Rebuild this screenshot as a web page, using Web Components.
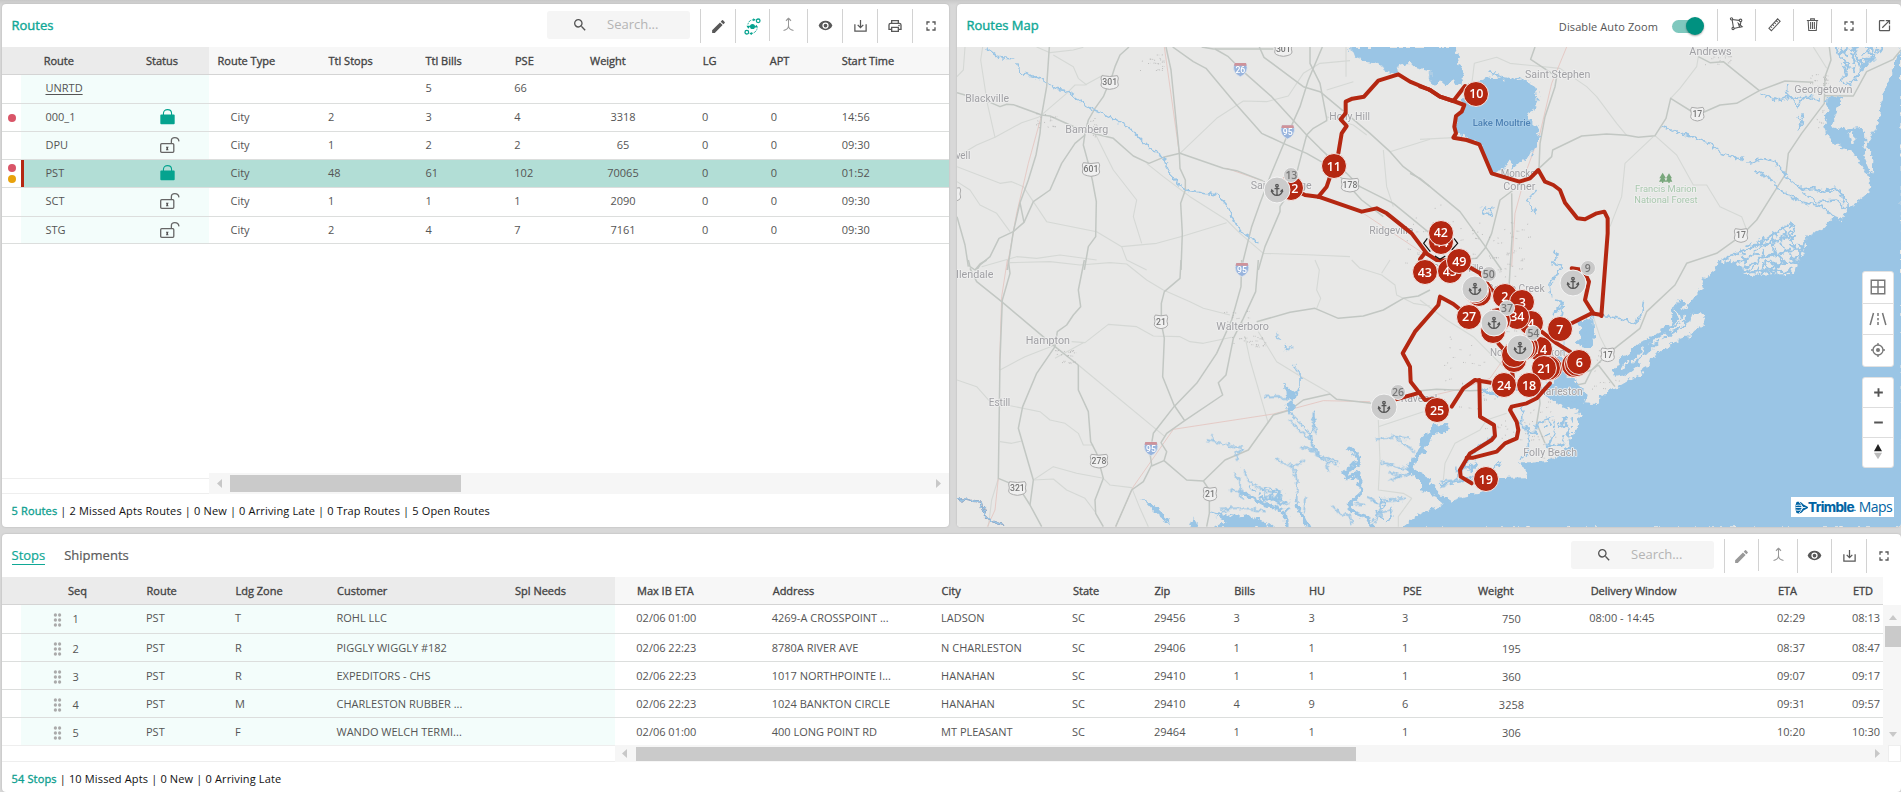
<!DOCTYPE html>
<html lang="en">
<head>
<meta charset="utf-8">
<title>Routes</title>
<style>
html,body{margin:0;height:100%}
body{background:#d8d8d8;font-family:"Open Sans","Noto Sans",sans-serif;font-size:11px;color:#555;overflow:hidden}
</style>
</head>
<body>
<dispatch-app></dispatch-app>
<script>
const define=(name,html,setup)=>customElements.define(name,class extends HTMLElement{
  connectedCallback(){
    if(this.shadowRoot)return;
    const root=this.attachShadow({mode:'open'});
    const t=document.createElement('template');
    t.innerHTML=typeof html==='function'?html(this):html;
    root.append(t.content.cloneNode(true));
    if(setup)setup(this,root);
  }
});

/* ---------- icons ---------- */
const ICONS={
  search:'<path d="M15.5 14h-.79l-.28-.27A6.47 6.47 0 0 0 16 9.5 6.5 6.5 0 1 0 9.5 16c1.61 0 3.09-.59 4.23-1.57l.27.28v.79l5 4.99L20.49 19l-4.99-5zm-6 0C7.01 14 5 11.99 5 9.5S7.01 5 9.5 5 14 7.01 14 9.5 11.99 14 9.5 14z"/>',
  pencil:'<path d="M3 17.25V21h3.75L17.81 9.94l-3.75-3.75L3 17.25zM20.71 7.04a1 1 0 0 0 0-1.41l-2.34-2.34a1 1 0 0 0-1.41 0l-1.83 1.83 3.75 3.75 1.83-1.83z"/>',
  route:'<g fill="none" stroke="currentColor" stroke-width="1.800"><circle cx="20" cy="4" r="2.600"/><circle cx="4" cy="20" r="2.600"/><path stroke-width="1.300" stroke-dasharray="4 1.500" d="M15 2.500C9 2.500 7 4 5.500 9M9 22c5 0 8.500-3 9.500-7"/></g><circle cx="12" cy="12" r="3.600"/><path d="M9.500 11 6 15 3.500 11zM14.500 13.500l3-4 2.500 4zM13 .3l3.500 2.200-3.500 2.200zM11 19.800l-3.500 2.200 3.500 2.200z"/>',
  merge:'<path fill="none" stroke="currentColor" stroke-width="1.700" d="M12 2v12c0 4-3 6.500-8 7.500M12 14c0 4 3 6.500 8 7.500M8 6l4-4 4 4M10 3h4"/>',
  eye:'<path d="M12 4.500C7 4.500 2.730 7.610 1 12c1.730 4.390 6 7.500 11 7.500s9.270-3.110 11-7.500c-1.730-4.390-6-7.500-11-7.500zM12 17a5 5 0 1 1 0-10 5 5 0 0 1 0 10zm0-8a3 3 0 1 0 0 6 3 3 0 0 0 0-6z"/>',
  download:'<path fill="none" stroke="currentColor" stroke-width="2" d="M3 10v11h18V10M12 3v12M7.500 11l4.500 4.500L16.500 11"/>',
  print:'<path fill="none" stroke="currentColor" stroke-width="2" d="M7 8V4h10v4M7 17H3v-6.500C3 9 4 8 5.500 8h13C20 8 21 9 21 10.500V17h-4M7 14h10v6H7z"/><circle cx="18" cy="11.300" r="1.200"/>',
  full:'<path d="M7 14H5v5h5v-2H7v-3zm-2-4h2V7h3V5H5v5zm12 7h-3v2h5v-5h-2v3zM14 5v2h3v3h2V5h-5z"/>',
  lasso:'<g fill="none" stroke="currentColor" stroke-width="1.800"><path d="M5 5.500 16 7M19 9l-1 6M16 18l-8 2M5 6l2 12"/><circle cx="4" cy="4.500" r="1.800"/><circle cx="18.500" cy="7" r="2"/><circle cx="6.500" cy="20" r="1.800"/><path d="m15 12 6 5-4 1z"/></g>',
  ruler:'<path fill="none" stroke="currentColor" stroke-width="1.700" d="M3 18 17 3l4 4L7 22zM6 15l2 2M9 12l2 2M12 9l2 2M15 6l2 2"/>',
  trash:'<path fill="none" stroke="currentColor" stroke-width="1.700" d="M3 5.500h18M9 5V3h6v2M5 6l1 15.500h12L19 6M9 8v11M12 8v11M15 8v11"/>',
  open:'<path d="M19 19H5V5h7V3H5a2 2 0 0 0-2 2v14a2 2 0 0 0 2 2h14c1.100 0 2-.9 2-2v-7h-2v7zM14 3v2h3.590l-9.830 9.830 1.410 1.410L19 6.410V10h2V3h-7z"/>',
  grid:'<path fill="none" stroke="currentColor" stroke-width="1.900" d="M3 3h18v18H3zM12 3v18M3 12h18"/>',
  road:'<path fill="none" stroke="currentColor" stroke-width="2" d="M6 4 1.500 20M18 4l4.500 16M12 4v4M12 10.500v3M12 16v4"/>',
  locate:'<g fill="none" stroke="currentColor" stroke-width="2"><circle cx="12" cy="12" r="7.500"/><path d="M12 1.500V5M12 19v3.500M1.500 12H5M19 12h3.500"/></g><circle cx="12" cy="12" r="3"/>',
  plus:'<path fill="none" stroke="currentColor" stroke-width="3.500" d="M12 4v16M4 12h16"/>',
  minus:'<path fill="none" stroke="currentColor" stroke-width="3.500" d="M4 12h16"/>',
  compass:'<path fill="#222" d="m12 0 6 11H6z"/><path fill="#bbb" d="M6 13h12l-6 10z"/>',
  locked:'<path fill="none" stroke="#05a38f" stroke-width="1.800" d="M5.500 10V7C5.500 3.500 8.300 1 12 1s6.500 2.500 6.500 6v3"/><rect x=".5" y="8.500" width="23" height="15" rx="1.500" fill="#05a38f"/>',
  unlocked:'<g fill="none" stroke="#666" stroke-width="1.900"><rect x="1" y="10" width="19" height="13" rx="1.500"/><path d="M16.500 10V5.500C16.500 3 18.500 1 21.500 1S27 3 27.500 6.500"/></g><path fill="#555" d="M8.500 14.500h4l-1 2.200.8 3h-3.600l.8-3z"/>',
  grip:'<g fill="#aaa"><circle cx="4" cy="3" r="2.700"/><circle cx="11" cy="3" r="2.700"/><circle cx="4" cy="11" r="2.700"/><circle cx="11" cy="11" r="2.700"/><circle cx="4" cy="19" r="2.700"/><circle cx="11" cy="19" r="2.700"/></g>'
};
const icon=(n,w,h=w,vb='0 0 24 24')=>`<svg width="${w}" height="${h}" viewBox="${vb}" preserveAspectRatio="none" fill="currentColor">${ICONS[n]}</svg>`;

define('app-icon',e=>{const s=e.getAttribute('size')||17;
  return `<style>:host{display:flex}svg{display:block}</style>${icon(e.getAttribute('name'),s)}`});

/* ---------- toolbar pieces ---------- */
define('tool-button',e=>`<style>
:host{display:flex;box-sizing:border-box;width:${e.getAttribute('w')||35}px;height:${e.getAttribute('h')||34}px;border-left:1px solid #d2d2d2;justify-content:center;color:#585858}
:host([faded]){color:#999}:host([active]){color:#05a38f}
app-icon{height:17px;margin-top:${e.getAttribute('top')||9}px}
</style><app-icon name="${e.getAttribute('icon')}" size="${e.getAttribute('size')||17}"></app-icon>`);

define('search-box',`<style>
:host{display:flex;align-items:center;box-sizing:border-box;width:143px;height:28px;margin:2px 10px 0 0;padding-left:25px;background:#f5f5f5;border-radius:3px;color:#555}
span{margin-left:19px;font-size:13px;color:#b4b4b4;line-height:26px;height:28px}
</style><app-icon name="search" size="16"></app-icon><span>Search...</span>`);

define('toggle-switch',`<style>
:host{display:flex;width:32px;height:18px;align-items:center}
i{width:28px;height:13px;border-radius:7px;background:#7fc8be}
b{width:18px;height:18px;border-radius:50%;background:#009180;margin-left:-14px;box-shadow:0 1px 2px rgba(0,0,0,.35)}
</style><i></i><b></b>`);

define('panel-card',`<style>
:host{display:flex;flex-direction:column;background:#fff;border-radius:4px;overflow:hidden;min-width:0;box-shadow:0 0 2px rgba(0,0,0,.18)}
header{display:flex;height:43px;flex:none;justify-content:space-between}
.t{padding:0 0 0 9.500px;line-height:43px;font-size:13px;color:#10a896;-webkit-text-stroke:.4px}
.tools{display:flex;align-items:flex-start;padding-top:5px}
</style><header><div class="t"><slot name="title"></slot></div><div class="tools"><slot name="tools"></slot></div></header><slot></slot>`);

/* ---------- data grid ---------- */
const GRIDS={
  routes:{
    fixed:207,heights:[29,28,28,28,29,27],gutter:19,lift:1,
    cols:[['Route',41.7,1.800],['Status',144,14],['Route Type',215.500,13],['Ttl Stops',326.500,-.5],['Ttl Bills',423.500,0],['PSE',513,-.7],['Weight',588,33,'c'],['LG',700.700,-.7],['APT',767.700,1],['Start Time',839.700,0]],
    rows:[['<u>UNRTD</u>','','','','5','66','','','',''],
      ['000_1','L','City','2','3','4','3318','0','0','14:56'],
      ['DPU','U','City','1','2','2','65','0','0','09:30'],
      ['PST','L','City','48','61','102','70065','0','0','01:52'],
      ['SCT','U','City','1','1','1','2090','0','0','09:30'],
      ['STG','U','City','2','4','7','7161','0','0','09:30']],
    dots:{1:['#d95568'],3:['#d95568','#e8a20c']},selected:3
  },
  stops:{
    fixed:613,heights:[29,28,28,28,28],gutter:19,lift:0,
    cols:[['',51,0],['Seq',66,4.500,'d'],['Route',144.500,-.5],['Ldg Zone',233.500,-.5],['Customer',335,-.5],['Spl Needs',513,0],['Max IB ETA',635,-.7],['Address',770.700,-1],['City',939.600,-.5],['State',1071,-1],['Zip',1152.500,-.5],['Bills',1232.300,-.8],['HU',1307,-.5],['PSE',1401,-1],['Weight',1476,33.500,'cd'],['Delivery Window',1588.700,-1.500],['ETA',1776,-1],['ETD',1851,-1]],
    rows:[['G','1','PST','T','ROHL LLC','','02/06 01:00','4269-A CROSSPOINT ...','LADSON','SC','29456','3','3','3','750','08:00 - 14:45','02:29','08:13'],
      ['G','2','PST','R','PIGGLY WIGGLY #182','','02/06 22:23','8780A RIVER AVE','N CHARLESTON','SC','29406','1','1','1','195','','08:37','08:47'],
      ['G','3','PST','R','EXPEDITORS - CHS','','02/06 22:23','1017 NORTHPOINTE I...','HANAHAN','SC','29410','1','1','1','360','','09:07','09:17'],
      ['G','4','PST','M','CHARLESTON RUBBER ...','','02/06 22:23','1024 BANKTON CIRCLE','HANAHAN','SC','29410','4','9','6','3258','','09:31','09:57'],
      ['G','5','PST','F','WANDO WELCH TERMI...','','02/06 01:00','400 LONG POINT RD','MT PLEASANT','SC','29464','1','1','1','306','','10:20','10:30']],
    dots:{},selected:-1
  }
};
define('data-grid',e=>{
  const g=GRIDS[e.getAttribute('source')],c=g.cols;
  const tpl=[c[0][1],...c.map((k,i)=>(c[i+1]?c[i+1][1]-k[1]:60))].map(v=>v.toFixed(1)+'px').join(' ');
  const cell=(v,k)=>{
    if(v==='L')v=icon('locked',15,15.500);
    if(v==='U')v=icon('unlocked',20,16,'0 0 29 24');
    if(v==='G')v=icon('grip',9,14,'0 0 15 22');
    const f=k[3]||'',dy=f.includes('d')?'top:1px;':'';
    return f.includes('c')?`<span style="${dy}width:${k[2]*2}px;text-align:center">${v}</span>`:`<span style="${dy}margin-left:${k[2]}px">${v}</span>`;
  };
  return `<style>
:host{display:block}
.row{display:grid;grid-template-columns:${tpl};box-sizing:border-box;border-bottom:1px solid #dcdedd;white-space:nowrap;overflow:hidden;
 background:linear-gradient(90deg,#fff ${g.gutter}px,#f3fdfb ${g.gutter}px,#f3fdfb ${g.fixed}px,#fff ${g.fixed}px)}
.head{height:28px;line-height:27px;color:#444;-webkit-text-stroke:.35px;border-color:#d4d4d4;background:linear-gradient(90deg,#ebebeb ${g.fixed}px,#f7f7f7 ${g.fixed}px)}
.sel{background:linear-gradient(90deg,#fff 19px,#b42711 19px,#b42711 22px,#b2ded6 22px)}
.dots{display:flex;flex-direction:column;justify-content:center;gap:3px;padding-left:6px}
.dots i{width:8px;height:8px;border-radius:50%}
.cell{display:flex;min-width:0}
span{display:block;position:relative}
svg{display:block;margin-top:${6-g.lift*.7}px}
.grip svg{margin-top:8px}
u{text-underline-offset:2px}
</style><div class="row head"><div></div>${c.map(k=>`<div>${k[0]}</div>`).join('')}</div>
${g.rows.map((r,i)=>`<div class="row ${i===g.selected?'sel':''}" style="height:${g.heights[i]}px;line-height:${i===0?26:27-g.lift*2+(g.heights[i]===29&&g.lift?1:0)}px"><div class="dots">${(g.dots[i]||[]).map(d=>`<i style="background:${d}"></i>`).join('')}</div>${r.map((v,j)=>`<div class="cell ${v==='G'?'grip':''}">${cell(v,c[j])}</div>`).join('')}</div>`).join('')}`;
});

/* ---------- scroll bars and footer ---------- */
define('scroll-bar',e=>{const a=n=>e.getAttribute(n);const v=e.hasAttribute('vertical');
  return `<style>
:host{display:flex;box-sizing:border-box;background:#f6f6f6;align-items:center;justify-content:space-between;flex-direction:${v?'column':'row'};padding:${a('pad')}}
b{background:#cacaca;flex:none;${v?'height':'width'}:${a('thumb')}px;${v?'width:100%':'height:'+a('thick')+'px'}}
.a{display:flex;flex:1;align-self:stretch;align-items:center;flex-direction:inherit;gap:${a('gap')}px}
svg{display:block;flex:none}
</style><div class="a"><svg width="8" height="9"><path fill="#c8c8c8" d="${v?'M0 8 4 3l4 5z':'M6 0v9L1 4.500z'}"/></svg><b></b></div><svg width="8" height="9"><path fill="#c8c8c8" d="${v?'M0 2h8L4 7z':'M1 0v9l5-4.500z'}"/></svg>`});

define('status-line',`<style>:host{display:block;padding-left:9.500px;color:#111;white-space:nowrap;font-size:11px;letter-spacing:.15px}
b{font-weight:400;color:#10a090;-webkit-text-stroke:.35px}</style><b><slot name="count"></slot></b><slot></slot>`);

define('tab-strip',`<style>:host{display:flex;gap:19px;line-height:17px;padding:12.500px 0 0;-webkit-text-stroke:.2px}
b{font-weight:400;border-bottom:1px solid #10a896}span{color:#5b5b5b;}</style><b><slot name="current"></slot></b><span><slot></slot></span>`);

/* ---------- map ---------- */
define('map-pin',e=>{
  const k=e.getAttribute('kind')||'stop';
  return `<style>
:host{position:absolute;display:flex;align-items:center;justify-content:center;box-sizing:border-box;transform:translate(-50%,-50%);left:${e.getAttribute('x')}px;top:${e.getAttribute('y')}px;
${k==='stop'?'width:26px;height:26px;background:#b42711;color:#fff;font:600 12.500px "Open Sans",sans-serif;border:1.500px solid #f4e9e7;':k==='anchor'?'width:27px;height:27px;background:#cbcbcb;color:#555;border:1.500px solid #f4f4f4;':'width:16px;height:16px;background:#c9c9c9;color:#777;font:600 10.500px "Open Sans",sans-serif;border:1px solid #eee;'}
border-radius:50%;letter-spacing:-.1px}
</style>${k==='anchor'?'<svg width="13" height="13" viewBox="0 0 24 24" fill="none" stroke="#555" stroke-width="2.400"><circle cx="12" cy="4" r="2.300"/><path d="M12 6v16M7.500 9.500h9M2 13c1 5.500 5 8.500 10 9 5-.5 9-3.500 10-9M1 16l1.300-4 3.500 3M23 16l-1.300-4-3.500 3"/></svg>':'<slot></slot>'}`});

const F={A:[950,0],B:[1420,0],C:[950,260],D:[1420,260],E:[1370,200],G:[1180,400],H:[1560,210]};
const frame=(f,body)=>`<g transform="translate(${F[f]}) scale(.33333)">${body}</g>`;
const lines=(f,cls,list)=>frame(f,list.trim().split('\n').map(l=>`<polyline class="${cls}" points="${l.trim()}"/>`).join(''));
const labels=(f,list)=>frame(f,list.map(([t,x,x2,y,c])=>`<text class="${c||'lb'}" x="${x}" y="${y}" textLength="${x2-x}" lengthAdjust="spacingAndGlyphs">${t}</text>`).join(''));
const us=(f,list)=>frame(f,list.map(([n,x,y])=>{const w=n.length>2?26:20;return `<g transform="translate(${x} ${y})"><path fill="#f0f0f0" stroke="#aaa" stroke-width="3" d="M${-w+3}-20Q0-15 ${w-3}-20L${w}-13Q${w-4} 0 ${w} 8Q${w} 18 0 21Q${-w} 18 ${-w} 8Q${-w+4} 0 ${-w}-13z"/><text class="sh" y="9">${n}</text></g>`}).join(''));
const inter=(f,list)=>frame(f,list.map(([n,x,y])=>`<g transform="translate(${x} ${y})"><path fill="#98b4dd" stroke="#e4e8ef" stroke-width="2" d="M-17-19H17Q24-4 17 8 12 17 0 22-12 17-17 8-24-4-17-19z"/><path fill="#cf9299" d="M-17-19H17L19-11H-19z"/><text class="sh w" y="11">${n}</text></g>`).join(''));

function mapSvg(){
const major=lines('A','ma',`298,141 290,260 275,345 270,400 258,465 235,540 210,608 222,667
537,141 510,165 495,200 487,225 460,290 435,325 415,360 405,400 400,435 415,490 427,540 439,605 437,710 415,740 403,810
21,278 115,305 150,320 170,313 190,314 275,345 300,348 400,393 490,415 550,468 597,490 640,472 690,460 820,505 860,512 945,545
648,141 663,210 672,300 688,460 690,505 706,540 706,570 692,610 697,700 693,810
405,405 375,430 335,490 300,570 250,605 222,667 190,695 147,715 120,770 90,795 80,810
210,608 190,695 180,760 172,810
668,141 730,185 768,205 860,315 935,400 1000,430 1070,460 1140,500 1180,540 1235,600 1300,650
755,141 790,147 970,147
795,147 835,170 880,215 965,290 1070,405 1110,445 1190,520 1230,560 1330,610 1440,700
928,141 942,172 1060,260 1110,275 1200,350 1260,400 1320,455 1360,500 1440,560
1117,141 1075,240 1050,320 1010,410 960,530 930,610 905,680 880,780 875,810
1080,141 1080,190 1110,250 1130,355 1130,362 1090,385 1070,405 1045,500 1030,560 990,620 990,635 945,740 925,810
21,650 45,735 55,800`)+lines('C','ma',`403,0 385,90 392,140 370,165 350,195 322,215 315,260 260,340 218,440 205,505 250,660 240,735 275,800
693,0 690,55 643,95 634,130 634,190 643,235 638,350 672,435 704,482
875,0 873,80 845,180 800,280 740,370 672,440 610,520 600,580 605,615 580,665 545,690 497,800
925,0 917,95 880,175 850,235 828,345 805,368 818,405 704,482 650,520 633,548 650,575 642,602 605,618
60,25 80,65 155,125 315,260 385,315
385,315 385,390 415,455 422,545 440,580 460,655 435,720 437,760 460,800
175,0 180,40 157,120 150,300 145,655 205,680 240,735
642,602 710,660 760,663 825,600 895,570 970,465 1020,450 1060,420 1140,402 1160,418 1265,430
760,663 778,690 778,760 770,800
920,185 1020,157 1095,145 1165,175 1240,168 1300,150 1360,115 1405,108 1440,90
55,0 60,20 75,30 90,12 110,0`)+lines('B','ma',`345,141 332,178 410,230 405,260 375,350 360,430 357,505
357,505 395,470 398,450 485,408 560,402 620,406 655,412 705,407 738,355 752,295 832,345 900,315 950,310 1018,272 1095,243 1180,247
1018,272 910,185 870,188 835,170
1228,141 1233,180 1215,230 1213,310 1145,400 1105,460 1098,520 1060,580 1010,660 965,706 890,760 800,790 765,855 680,935 660,985 565,1060 515,1110 470,1125 400,1130
1213,287 1300,288 1340,215 1420,178 1443,150
-30,520 0,535 120,635 200,745 245,810
280,570 240,600 215,700 195,745 170,775 110,780
275,580 277,700 270,810 265,900 240,960`)+lines('D','ma',`535,315 585,380
535,315 515,330 495,370 470,375
0,392 50,388 150,392 200,390
355,380 360,430 350,490 375,550`);
const minor=lines('A','mi',`98,141 92,180 112,310 135,412
21,470 80,435 135,412 215,368 265,352 280,340 350,280 375,255 405,255 460,225
260,141 300,158 370,150 400,142
310,165 370,200 385,235 410,255
21,500 150,550 185,545 220,560 290,665 440,695 515,740 620,730 700,708 830,668
435,400 470,470 490,510 560,600 550,650 575,730
590,490 640,530 720,590 830,660 870,700 940,760 1090,765 1200,770
690,460 800,355 880,303 950,305 1015,288 1060,220 1110,190 1200,182
1130,270 1210,245
1188,141 1188,230
21,545 60,570 90,615 140,640 180,695
95,800 200,770 260,775 330,765 440,780
515,740 530,780 590,810
1250,405 1210,375 1130,350
1320,455 1440,418
1300,450 1310,560 1330,620
45,141 40,210 21,230`)+lines('C','mi',`180,8 300,5 390,15 480,8 530,12 590,60 640,90 720,125 760,145 840,165
150,330 225,290 315,255
365,245 405,248 475,193 560,200 610,228 690,230 720,245 760,250 845,232
315,295 400,248
385,315 645,530
21,360 80,380 120,425 270,455 300,480 345,490 385,520 400,555 430,555
150,545 185,550 215,543
250,660 310,620 380,640 460,655 480,675 545,683 570,745 595,800
250,660 310,657 350,690 405,715 435,755
925,215 980,305 1045,345 1140,400
885,230 900,300 955,490
1095,0 1108,30 1100,90 1112,115 1100,145
1205,0 1230,25 1295,45 1335,75 1340,105 1390,130 1440,138
1285,480 1290,600 1285,690 1360,700 1385,715 1345,770 1345,800
145,655 125,720 115,800
1285,500 1420,455
1295,40 1320,0`)+lines('B','mi',`155,255 163,190 230,172 270,190 420,205 500,260 530,290 590,370 620,406
835,170 830,200 780,265 752,295
700,410 615,490 605,590 570,680
705,407 770,465 820,555 860,555 900,620 965,650 980,690
1180,141 1220,205
0,418 100,413`)+lines('D','mi',`70,660 75,610 105,550 180,510 200,480 260,460
520,170 540,230 565,280
0,120 80,180 160,230 250,320`);
const rail=lines('A','ra',`643,141 688,460
830,505 945,545
1240,640 1420,760
275,345 235,490 200,640 170,810`)+lines('C','ra',`172,0 155,110 148,330
145,655 135,750 112,800
497,800 550,680 670,508 970,462 1120,422 1260,425`)+lines('B','ra',`440,141 395,250 360,400 320,510 285,640 275,800`)+lines('D','ra',`0,415 130,385 210,355 270,270`);
const ocean=frame('B',`<path class="wa" d="M1443 141 1432 175 1410 230 1395 270 1380 330 1376 365 1360 400 1343 430 1350 452 1357 480 1356 523 1340 520 1350 550 1345 580 1290 625 1262 658 1243 650 1210 685 1155 710 1158 740 1135 785 1125 822 975 825 970 800 940 790 897 785 890 805 850 835 840 870 815 895 805 925 820 945 852 942 854 960 835 985 800 1010 760 1025 720 1060 690 1075 685 1095 665 1105 670 1122 620 1145 560 1180 520 1212 497 1210 470 1160 430 1145 380 1152 360 1170 380 1190 400 1205 482 1240 470 1280 445 1340 400 1380 330 1390 290 1390 325 1415 318 1432 220 1435 185 1475 130 1490 90 1505 0 1540-55 1585H1450z"/>
<path class="wa" d="M1215 300 1240 285 1270 288 1258 320 1245 350 1236 382 1260 388 1310 382 1335 392 1336 430 1330 470 1352 520 1335 515 1300 458 1250 435 1222 405 1212 360 1227 325z"/><path fill="#e8e8e7" d="M1285 400 1300 395 1305 430 1295 432z"/>
<path class="wa" d="M-20 141H107L118 190 132 225 125 258 95 245 30 252 20 225 5 215-20 190z"/>
<path class="wa" d="M160 250 200 232 270 240 310 235 345 260 353 300 340 330 315 345 335 365 360 390 350 430 330 470 300 485 275 510 270 475 250 515 215 520 180 433 105 400 115 345 140 315 120 300z"/>`)
+frame('A',`<path class="wa" d="M1195 141H1450V215L1410 220 1380 190 1340 195 1345 222 1310 215 1290 195 1250 185 1215 172z"/><path fill="#e8e8e7" d="M1345 195 1380 188 1400 205 1440 215V250L1370 235z"/>`)
+frame('D',`<path class="wa" d="M388 295 440 290 438 340 470 365 500 400 490 430 430 420 395 395 400 350zM470 185 520 180 525 230 510 262 465 250 488 230zM0 645 25 660 45 700 90 720 75 730 30 700 0 690zM140 620 170 605 160 640zM230 340 330 400 320 405 250 370zM178 385 240 400 230 410 185 398z"/>`)
+frame('H',`<path class="wa" d="M355 265 340 290 330 345 290 365 245 395 195 435 160 480 165 500 195 495 235 465 245 435 275 420 300 395 345 370 390 335 400 300 385 285z"/>`)
+frame('G',`<path class="wa" d="M85 332 130 345 165 350 210 345 260 368 280 385H90L140 365zM760 75 805 70 800 95 765 100 750 120 735 118zM30 385 42 352 52 385zM320 12 345 5 340 25 325 40z"/>`)
+frame('C',`<path class="wa" d="M1005 375 1030 395 1045 395 1025 425 1008 415zM575 715 610 735 655 775 660 795 620 765z"/>`);
const wide=lines('G','rw',`180,275 230,300 290,325 320,350 320,390
345,310 365,345 388,390
500,140 530,165 538,180 515,205 492,213 500,235 530,222 542,240 540,285 505,320 520,335 560,350 580,385`)+lines('G','rx',`770,90 735,115 725,150 700,180 690,210 740,240 770,280 805,312`);
const rivers=lines('A','ri',`105,141 145,172 190,177
200,190 210,218 270,235 320,268 350,272 410,320 470,345 540,385 600,445 640,472 660,525 705,570 760,580 805,585 835,620 850,660 880,700 925,725`)+lines('B','ri',`725,380 770,395 870,430 905,460 960,480 975,470
985,490 1030,475 1065,485 1100,530 1150,570 1180,565 1215,575 1240,560 1280,600 1282,635
1005,512 1050,535 1080,570 1140,605 1210,620 1240,650
1150,580 1190,605 1250,600 1280,630
1215,575 1260,570 1272,610
1020,280 1070,300 1120,290 1200,300
1100,255 1100,280 1135,320 1145,290 1180,290
1250,141 1255,165 1285,190 1280,220 1262,245 1290,255 1320,220 1340,190 1380,150
1300,141 1310,170 1330,200
1340,141 1355,165 1320,210
1370,141 1365,175 1330,180
1133,345 1148,370 1135,385 1150,340
205,212 240,228 270,240 300,232
350,570 322,600 350,640
188,625 215,620 215,645 190,640 188,625
400,750 415,770 395,790 425,795 410,830 390,850 395,890`)+lines('D','ri',`0,555 30,520 70,505
545,165 600,175 640,190 665,170 670,125
530,160 490,190 500,230 480,260
405,120 430,125 400,160 430,140 425,180 400,175 430,240 435,320
305,440 305,500 325,515 325,580 300,600
120,655 140,600 180,555 220,530
60,675 120,665 180,640 245,610
310,500 345,520 350,490 400,470`)+lines('C','ri',`980,220 992,240
1005,255 1010,270 1030,260
1030,315 1050,340 1050,380 1030,410 1015,455 1050,490 1080,520 1085,550 1110,590 1165,605
1090,455 1095,490 1080,530
945,410 985,408 1010,420`)+lines('G','ri',`80,120 120,130 165,140 190,145 165,165 175,182
95,108 100,125
590,118 640,110 690,115
650,112 665,130 690,145 705,155
600,185 650,200 690,210
625,215 660,225 630,240 690,220
160,215 180,240 180,290
150,270 185,275 190,300
190,205 205,245 250,270 300,275 300,320
250,270 260,300 300,290
240,310 275,280 290,310 330,310
330,60 350,85 385,110 410,165 440,185 475,195
360,140 400,150
440,185 445,220
410,100 400,70 400,40
350,320 350,240 340,200 375,180
340,200 310,190 285,175
375,290 372,340
120,325 200,325 260,335
120,340 150,325
460,320 480,340 510,345 515,375
580,370 600,330 610,300 640,300 680,295
560,290 600,310 600,350
590,340 640,330
520,310 560,315
780,260 830,240 830,200
780,245 830,240 875,240`)+lines('H','rt',`475,155 560,120 620,85 690,40 705,50
705,50 690,80 650,90 600,110 560,150 520,160
690,80 705,120 660,130 600,140 570,180
640,85 640,120 680,160 650,170 620,150 600,190
735,90 720,140 710,160
560,190 620,180 700,190`)+lines('C','bo',`21,715 60,722 95,725 105,765 130,785 160,795`)+lines('C','ri',`21,715 60,722 95,725 105,765 130,785 160,795`);
const isles=lines('H','is',`370,270 380,285 365,300
350,300 360,330 345,345
375,320 360,350 330,360
320,370 290,395 270,400
250,410 235,440 215,455
205,450 190,475
385,345 340,375 300,400`);
const marsh=frame('B',`<path d="M900 783 980 735 1060 692 1120 665 1130 715 1158 720 1130 825 980 825zM370 1270 480 1235 460 1330 380 1360zM1250 141H1400L1320 220 1280 250z"/>`)+frame('G',`<path d="M200 255 290 265 330 290 330 350 260 320zM575 290 640 290 640 370 590 375z"/>`);
let specks='';let seed=7;const rnd=()=>(seed=(seed*16807)%2147483647)/2147483647;
for(const[x,y,w,h,n]of[[1140,54,24,18,22],[1035,114,20,14,16],[1084,118,14,20,12],[1222,311,26,16,16],[1232,336,34,12,24],[1054,350,20,14,20],[1470,220,60,60,50],[1440,330,80,80,40],[1500,350,40,50,20],[1530,400,30,60,26],[1810,74,22,18,24],[1816,110,14,24,12],[1480,420,50,20,22],[1700,55,35,10,14],[1405,205,60,60,20],[1590,350,40,50,20]])
  for(let i=0;i<n;i++){specks+=`M${(x+rnd()*w).toFixed(1)} ${(y+rnd()*h).toFixed(1)}l${(1+rnd()*2).toFixed(1)} ${(rnd()*1-.5).toFixed(1)}`}
const route=lines('A','ro',`1165,460 1175,400 1190,378 1172,358 1187,340 1187,305 1207,296 1242,290 1285,242 1345,223 1380,245 1440,270
1151,498 1130,560 1105,590
1024,564 1065,585 1105,590 1235,635 1280,625 1310,640 1385,700 1430,760
1000,540 1024,526`)+lines('B','ro',`30,270 60,290 100,303 135,258 169,281
28,269 60,290 100,303 133,315 125,335 108,348 103,380 108,400 100,413 140,420 178,433 215,520 298,545 330,535 355,510 375,545 400,555 420,570 435,608 472,655 495,658 530,640 553,635 563,655 563,700 544,948
0,259 28,269`)+lines('E','ro',`164,160 150,178
164,157 200,180 268,184 330,220 365,270 404,288
695,345 665,340 605,370 569,388
670,340 645,300 657,245 640,210 605,205
297,350 250,312 210,290 205,315 135,395 98,460 120,500 122,545 165,600 190,597
150,578 70,600
245,620 280,565 315,540 402,555
328,540 330,650 372,675 375,708 365,720 300,760 270,810 272,830 305,850
290,773 310,773 380,755 405,730 440,715 445,690 440,665 420,630 425,620 470,610 500,595 540,550
385,430 420,470 430,540
470,360 560,430 600,455 628,486
404,288 420,330 480,380`);
return `<svg viewBox="957 47 944 480" width="944" height="480">
<style>
polyline{fill:none;stroke-linejoin:round}
.ma{stroke:#c2c7c3;stroke-width:4.500}.mi{stroke:#d5d8d5;stroke-width:3.300}.ra{stroke:#e3bfb9;stroke-width:2.200}
.wa{fill:#9ac5e5}.ri{stroke:#9ac5e5;stroke-width:5}.rt{stroke:#9ac5e5;stroke-width:6}.rw{stroke:#9ac5e5;stroke-width:11}.rx{stroke:#9ac5e5;stroke-width:17}.is{stroke:#e8e8e7;stroke-width:7}.bo{stroke:#8088a5;stroke-width:7}.ro{stroke:#b42711;stroke-width:12;stroke-linecap:round}
text{font-family:Roboto,sans-serif;font-size:31px;paint-order:stroke;stroke:#efefef;stroke-width:5px;stroke-linejoin:round;fill:#a0a0a4}
.lk{fill:#4f83b5;stroke:#a9cde8;font-size:27px;font-weight:500}.gr{fill:#a9c8ae;font-size:27px}
.sh{font-size:26px;font-weight:500;fill:#777;stroke:none;text-anchor:middle}.w{fill:#fff}
</style>
<defs><filter id="jag" x="-5%" y="-5%" width="110%" height="110%"><feTurbulence type="fractalNoise" baseFrequency=".16" numOctaves="3" seed="4"/><feDisplacementMap in="SourceGraphic" scale="9" xChannelSelector="R" yChannelSelector="G"/></filter>
<filter id="jag2" x="-5%" y="-5%" width="110%" height="110%"><feTurbulence type="fractalNoise" baseFrequency=".2" numOctaves="2" seed="9"/><feDisplacementMap in="SourceGraphic" scale="7" xChannelSelector="R" yChannelSelector="G"/></filter>
<filter id="vein" color-interpolation-filters="sRGB"><feTurbulence type="turbulence" baseFrequency=".11" numOctaves="2" seed="12"/><feColorMatrix values="0 0 0 0 .604  0 0 0 0 .773  0 0 0 0 .898  -14 0 0 0 2.400"/><feComposite operator="in" in2="SourceGraphic"/></filter></defs>
<rect x="957" y="47" width="944" height="480" fill="#e8e8e7"/>
${minor}${rail}${major}<path d="${specks}" stroke="#aaa" stroke-width=".7" stroke-dasharray="1 1"/>
<g filter="url(#vein)">${marsh}</g><g filter="url(#jag)">${ocean}${wide}${isles}</g><g filter="url(#jag2)">${rivers}</g>
${us('A',[['301',479,247],['301',1000,148],['601',423,508],['178',1200,555],['3',12,583]])}${us('B',[['17',832,342],['17',963,706]])}${us('C',[['21',633,185],['278',447,603],['321',202,685],['21',780,702]])}${us('D',[['17',563,284]])}
${inter('A',[['26',871,208],['95',1013,395]])}${inter('C',[['95',876,28],['95',603,565]])}
${labels('A',[['Blackville',46,177,305],['Bamberg',346,475,398],['vell',17,61,477],['Holly Hill',1138,1260,359],['Saint George',902,1085,566],['Ridgeville',1258,1390,703]])}
${labels('B',[['Saint Stephen',315,511,235],['Andrews',808,935,164],['Georgetown',1123,1297,278],['Lake Moultrie',158,332,378,'lk'],['Moncks',242,346,530],['Corner',250,346,571],['Francis Marion',645,830,577,'gr'],['National Forest',643,833,608,'gr']])}
${labels('C',[['llendale',19,130,55],['Hampton',227,360,252],['Walterboro',799,957,211],['Estill',116,181,438],['Ravenel',1352,1462,426]])}
${labels('E',[['Summerville',190,340,217],['Goose Creek',350,524,276],['North Charleston',360,586,467],['Charleston',490,638,585],['Folly Beach',460,621,768]])}
${frame('B','<path fill="#79a77c" d="m728 518-10 17h5l-6 10h9v4h4v-4h9l-6-10h5z"/><path fill="#79a77c" d="m747 520-9 15h4l-5 10h8v4h4v-4h8l-5-10h4z"/>')}
${route}
${frame('E','<path fill="none" stroke="#111" stroke-width="3.500" d="m172 115-11 15 20 25M252 115l11 15-18 20M195 168l15 10 16-10"/>')}
</svg>`}

const PINS=[['E',214,127,'44'],['E',212,98,'42'],['E',164,217,'43'],['E',239,213,'45'],['E',268,184,'49'],['E',328,281,''],['E',318,272,''],['E',356,222,'50','s'],['E',314,268,'','a'],['E',404,288,'2'],['E',457,306,'3'],['E',297,350,'27'],['E',483,370,'4'],['E',442,350,'34'],['E',368,392,''],['E',385,360,''],['E',376,368,''],['E',371,370,'','a'],['E',411,325,'37','s'],['E',510,447,'14'],['E',433,480,''],['E',432,465,''],['E',468,442,''],['E',460,445,''],['E',450,445,'','a'],['E',490,400,'54','s'],['E',569,388,'7'],['E',541,505,''],['E',533,503,''],['E',523,504,'21'],['E',612,495,''],['E',620,491,''],['E',628,486,'6'],['E',402,555,'24'],['E',477,555,'18'],['E',347,838,'19'],['E',201,630,'25'],['E',84,577,'26','s'],['E',42,620,'','a'],['E',653,205,'9','s'],['E',610,248,'','a'],['A',1151,498,'11'],['A',1024,564,'12'],['A',981,570,'','a'],['A',1024,526,'13','s'],['B',169,281,'10']];

define('map-controls',`<style>
:host{position:absolute;right:7px;top:224px;display:flex;flex-direction:column;gap:10px}
div{display:flex;flex-direction:column;gap:1px;width:32px;background:#ddd;border-radius:3px;overflow:hidden;border:1px solid #e2e2e2;box-sizing:border-box;color:#555}
app-icon{background:#fff;align-items:center;justify-content:center}
.a app-icon{height:30.600px}.b app-icon{height:29px}
.a{color:#777}
</style><div class="a"><app-icon name="grid" size="18"></app-icon><app-icon name="road" size="18"></app-icon><app-icon name="locate" size="16"></app-icon></div>
<div class="b"><app-icon name="plus" size="13"></app-icon><app-icon name="minus" size="13"></app-icon><app-icon name="compass" size="16"></app-icon></div>`);

define('trimble-logo',`<style>
:host{position:absolute;right:7px;bottom:10px;width:103px;height:20px;background:#fff;display:flex;align-items:center;box-sizing:border-box;padding-left:4px;color:#0063a3;font:15px/20px Inter,sans-serif;white-space:nowrap}
b{font-weight:700;font-size:13.500px;letter-spacing:-.6px;-webkit-text-stroke:.2px}span{font:14px/20px "Open Sans",sans-serif;letter-spacing:-.6px;margin-left:3px}i{width:2px;font-size:10px}
</style><svg width="13" height="13" viewBox="0 0 26 26"><path fill="#0063a3" d="M3 2c6-2 11 1 14 5l9 5v2l-9 5c-3 5-8 7-14 5-3-8-3-15 0-22z"/><path d="M2 9c6-2 12 0 15 4-3 5-9 7-15 5M8 2c4 4 6 7 6 11s-2 8-6 11M1 13h20" fill="none" stroke="#fff" stroke-width="1.700"/></svg><b>Trimble</b><i>.</i><span>Maps</span>`);

define('routes-map',()=>`<style>:host{display:block;position:relative;height:480px;overflow:hidden}svg{display:block}</style>${mapSvg()}
${PINS.map(([f,x,y,t,k])=>`<map-pin kind="${k==='s'?'small':k==='a'?'anchor':'stop'}" x="${(F[f][0]+x/3-957).toFixed(1)}" y="${(F[f][1]+y/3-47).toFixed(1)}">${t}</map-pin>`).join('')}
<map-controls></map-controls><trimble-logo></trimble-logo>`);

/* ---------- page ---------- */
define('dispatch-app',`<style>
:host{display:grid;box-sizing:border-box;height:792px;width:1901px;overflow:hidden;padding:4px 0 0 2px;grid-template:523px 258px / 947px 944px;gap:7px 8px;background:linear-gradient(#c8c8c8 0,#d8d8d8 5px)}
.stops{grid-column:1/3}
.gap{flex:1}
.hs{display:flex;height:21px}
.lead{box-sizing:border-box;border-top:1px solid #eee;border-bottom:1px solid #eee;margin-top:5px;width:207px;flex:none}
.hs scroll-bar{flex:1}
.lbl{font-size:11px;letter-spacing:.1px;color:#555;line-height:35px;margin-right:14px}
toggle-switch{margin:8px 13px 0 0}
status-line{line-height:33px;height:33px}
.body{display:flex}.body data-grid{width:1881px;overflow:hidden}
.body scroll-bar{width:18px;margin-top:28px;}
.hs2{display:flex;height:17px;margin-top:-1px;position:relative}
.hs2 .lead{width:613px;margin:0;height:17px}
.hs2 .tail{width:13px;border:1px solid #eee;box-sizing:border-box}
.hs2 scroll-bar{width:1273px}
.stops status-line{line-height:34px}
</style>
<panel-card><span slot="title">Routes</span>
<search-box slot="tools"></search-box><tool-button slot="tools" icon="pencil"></tool-button><tool-button slot="tools" icon="route" w="34" active size="17"></tool-button><tool-button slot="tools" icon="merge" w="38" h="32" top="8" faded size="15"></tool-button><tool-button slot="tools" icon="eye" size="15"></tool-button><tool-button slot="tools" icon="download" size="15"></tool-button><tool-button slot="tools" icon="print" size="16"></tool-button><tool-button slot="tools" icon="full" w="37" size="16"></tool-button>
<data-grid source="routes"></data-grid><div class="gap"></div>
<div class="hs"><div class="lead"></div><scroll-bar pad="0 6px 0 7px" thumb="231" thick="17" gap="6"></scroll-bar></div>
<status-line><span slot="count">5 Routes</span> | 2 Missed Apts Routes | 0 New | 0 Arriving Late | 0 Trap Routes | 5 Open Routes</status-line>
</panel-card>
<panel-card><span slot="title">Routes Map</span>
<span class="lbl" slot="tools">Disable Auto Zoom</span><toggle-switch slot="tools"></toggle-switch><tool-button slot="tools" icon="lasso" w="38" h="32" top="7" size="15"></tool-button><tool-button slot="tools" icon="ruler" w="38" h="32" top="8" size="15"></tool-button><tool-button slot="tools" icon="trash" w="38" h="32" top="8" size="15"></tool-button><tool-button slot="tools" icon="full" size="16"></tool-button><tool-button slot="tools" icon="open" size="15"></tool-button>
<routes-map></routes-map></panel-card>
<panel-card class="stops"><tab-strip slot="title"><span slot="current">Stops</span>Shipments</tab-strip>
<search-box slot="tools"></search-box><tool-button slot="tools" icon="pencil" w="34" faded></tool-button><tool-button slot="tools" icon="merge" w="39" h="32" top="8" faded size="15"></tool-button><tool-button slot="tools" icon="eye" w="34" size="15"></tool-button><tool-button slot="tools" icon="download" size="15"></tool-button><tool-button slot="tools" icon="full" size="16"></tool-button>
<div class="body"><data-grid source="stops"></data-grid><scroll-bar vertical pad="7px 0 7px 2px" thumb="21" gap="5"></scroll-bar></div>
<div class="hs2"><div class="lead"></div><scroll-bar pad="0 6px" thumb="720" thick="14" gap="7"></scroll-bar><div class="tail"></div></div>
<status-line><span slot="count">54 Stops</span> | 10 Missed Apts | 0 New | 0 Arriving Late</status-line>
</panel-card>`);
</script>
</body>
</html>
